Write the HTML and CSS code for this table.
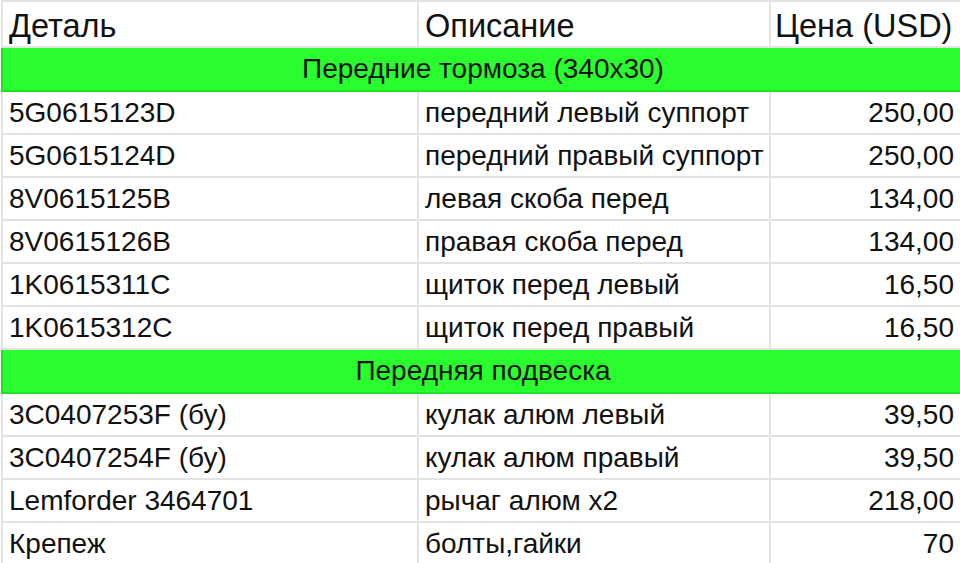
FILE: index.html
```html
<!DOCTYPE html>
<html lang="ru">
<head>
<meta charset="utf-8">
<title>Детали</title>
<link rel="stylesheet" href="styles.css">
</head>
<body>
<table class="sheet">
  <colgroup>
    <col class="c1"><col class="c2"><col class="c3">
  </colgroup>
  <thead>
    <tr class="head">
      <th>Деталь</th><th>Описание</th><th>Цена (USD)</th>
    </tr>
  </thead>
  <tbody>
    <tr class="group"><td colspan="3">Передние тормоза (340x30)</td></tr>
    <tr><td>5G0615123D</td><td>передний левый суппорт</td><td class="num">250,00</td></tr>
    <tr><td>5G0615124D</td><td>передний правый суппорт</td><td class="num">250,00</td></tr>
    <tr><td>8V0615125B</td><td>левая скоба перед</td><td class="num">134,00</td></tr>
    <tr><td>8V0615126B</td><td>правая скоба перед</td><td class="num">134,00</td></tr>
    <tr><td>1K0615311C</td><td>щиток перед левый</td><td class="num">16,50</td></tr>
    <tr><td>1K0615312C</td><td>щиток перед правый</td><td class="num">16,50</td></tr>
    <tr class="group"><td colspan="3">Передняя подвеска</td></tr>
    <tr><td>3C0407253F (бу)</td><td>кулак алюм левый</td><td class="num">39,50</td></tr>
    <tr><td>3C0407254F (бу)</td><td>кулак алюм правый</td><td class="num">39,50</td></tr>
    <tr><td>Lemforder 3464701</td><td>рычаг алюм x2</td><td class="num">218,00</td></tr>
    <tr><td>Крепеж</td><td>болты,гайки</td><td class="num">70</td></tr>
  </tbody>
</table>
</body>
</html>
```

FILE: styles.css
```css
html, body {
  margin: 0;
  padding: 0;
  background: #ffffff;
  overflow: hidden;
}
body {
  font-family: "Liberation Sans", Arial, Helvetica, sans-serif;
  color: #111111;
}
.sheet {
  border-collapse: collapse;
  table-layout: fixed;
  width: 962px;
  margin: 0 0 0 1px;
}
.c1 { width: 416px; }
.c2 { width: 352px; }
.c3 { width: 194px; }
.sheet th,
.sheet td {
  border: 2px solid #e3e3e3;
  padding: 0 6px 0 6px;
  height: 41px;
  font-size: 28px;
  font-weight: normal;
  text-align: left;
  white-space: nowrap;
  overflow: hidden;
  vertical-align: middle;
  line-height: 30px;
}
.sheet .head th {
  height: 41px;
  font-size: 32.5px;
  padding-top: 3px;
}
.sheet .head th:last-child {
  padding-left: 4px;
}
.sheet .group td {
  background: #2afd2e;
  border-color: #22e022;
  text-align: center;
  font-size: 28px;
  height: 42px;
}
.sheet td.num {
  text-align: right;
  padding-right: 9px;
}
```
